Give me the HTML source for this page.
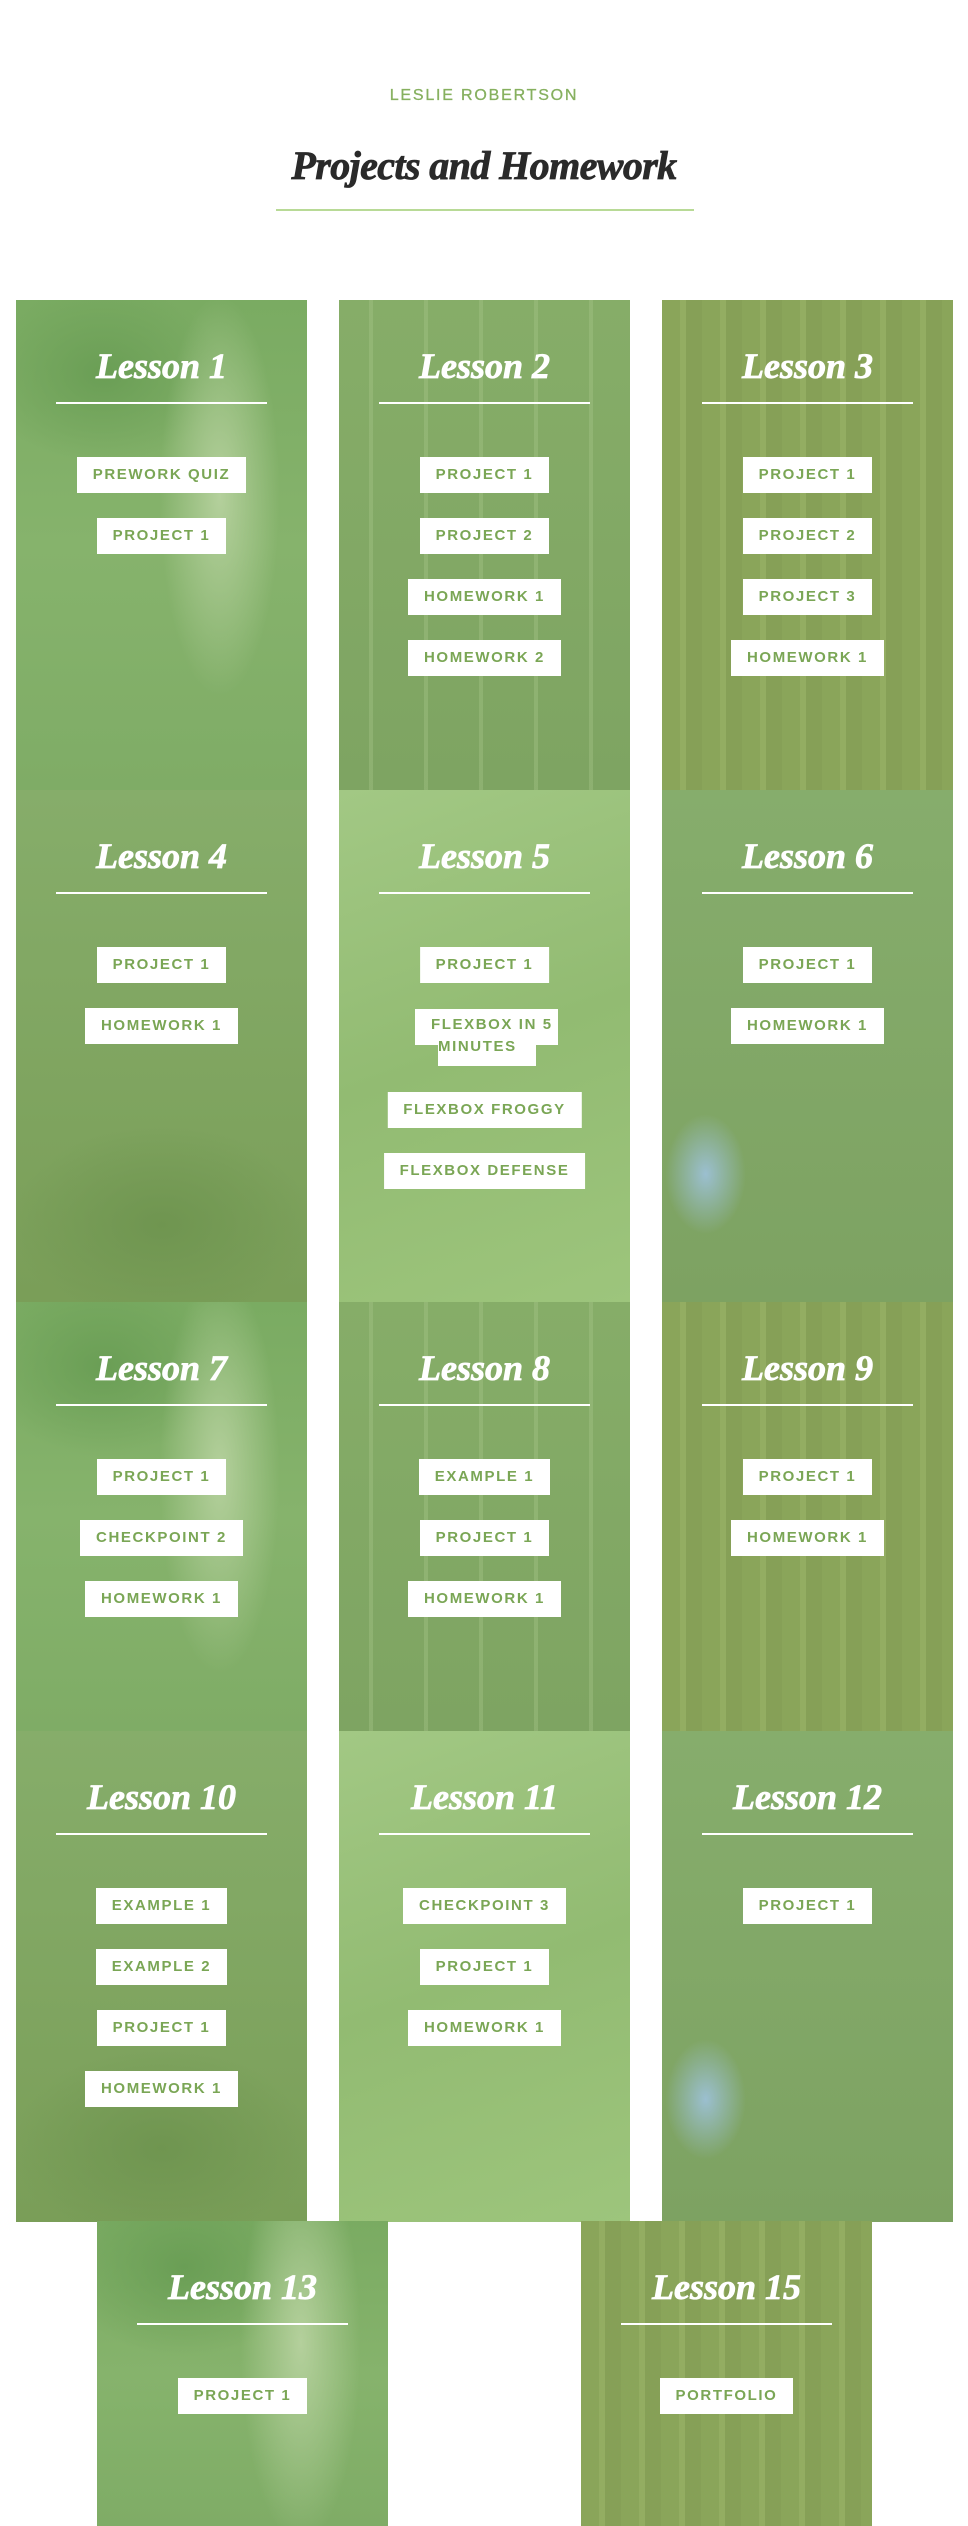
<!DOCTYPE html>
<html><head><meta charset="utf-8"><style>
*{margin:0;padding:0;box-sizing:border-box}
body{width:968px;height:2526px;background:#fff;position:relative;overflow:hidden;font-family:"Liberation Sans",sans-serif}
.sub{position:absolute;top:87px;left:0;width:968px;text-align:center;color:#86b05f;font-size:16px;letter-spacing:1.8px;-webkit-text-stroke:0.3px #86b05f}
h1{position:absolute;top:140px;left:0;width:968px;text-align:center;font-family:"Liberation Serif",serif;font-style:italic;font-weight:bold;font-size:40px;letter-spacing:-0.6px;color:#2a2a2a;line-height:52px;-webkit-text-stroke:0.8px #2a2a2a}
.hr{position:absolute;top:209px;left:276px;width:418px;height:2px;background:#b8da96}
.c{position:absolute;width:291px;overflow:hidden}
.t{position:absolute;top:44px;left:0;width:100%;text-align:center;font-family:"Liberation Serif",serif;font-style:italic;font-weight:bold;font-size:36px;line-height:44px;color:#fff;-webkit-text-stroke:0.8px #fff}
.u{position:absolute;top:102px;left:40px;right:40px;height:2px;background:#fff}
.bs{position:absolute;top:157px;left:0;width:100%;display:flex;flex-direction:column;align-items:center;gap:25px}
.b{height:36px;line-height:36px;padding:0 16px;background:#fff;color:#7aa655;font-size:15px;font-weight:bold;letter-spacing:1.6px;white-space:nowrap}
.A{background:radial-gradient(ellipse 60px 200px at 70% 40%,#b4d09c,transparent),radial-gradient(ellipse 120px 90px at 30% 15%,#6a9e55,transparent),linear-gradient(180deg,#7aab62,#86b36c 50%,#7fac66)}
.B{background:repeating-linear-gradient(90deg,transparent 0 30px,rgba(170,200,140,.35) 30px 34px,transparent 34px 55px),linear-gradient(180deg,#86ad68,#7ea462)}
.C{background:repeating-linear-gradient(90deg,#8aa55a 0 18px,#93ad62 18px 24px,#86a057 24px 40px),#8ba35c}
.D{background:radial-gradient(ellipse 150px 100px at 50% 85%,#6f9550,transparent),linear-gradient(180deg,#86ad6a,#7a9e58)}
.E{background:linear-gradient(160deg,#a2c884,#92bb72 50%,#9dc57c)}
.F{background:radial-gradient(ellipse 40px 60px at 15% 75%,#9bbfd0,transparent),linear-gradient(180deg,#86ad6c,#7da262)}
</style></head><body>
<div class="sub">LESLIE ROBERTSON</div>
<h1>Projects and Homework</h1>
<div class="hr"></div>

<div class="c A" style="left:16px;top:300px;height:490px"><div class="t">Lesson 1</div><div class="u"></div><div class="bs"><div class="b">PREWORK QUIZ</div><div class="b">PROJECT 1</div></div></div>
<div class="c B" style="left:339px;top:300px;height:490px"><div class="t">Lesson 2</div><div class="u"></div><div class="bs"><div class="b">PROJECT 1</div><div class="b">PROJECT 2</div><div class="b">HOMEWORK 1</div><div class="b">HOMEWORK 2</div></div></div>
<div class="c C" style="left:662px;top:300px;height:490px"><div class="t">Lesson 3</div><div class="u"></div><div class="bs"><div class="b">PROJECT 1</div><div class="b">PROJECT 2</div><div class="b">PROJECT 3</div><div class="b">HOMEWORK 1</div></div></div>

<div class="c D" style="left:16px;top:790px;height:512px"><div class="t">Lesson 4</div><div class="u"></div><div class="bs"><div class="b">PROJECT 1</div><div class="b">HOMEWORK 1</div></div></div>
<div class="c E" style="left:339px;top:790px;height:512px"><div class="t">Lesson 5</div><div class="u"></div>
<div class="b" style="position:absolute;top:157px;left:50%;transform:translateX(-50%)">PROJECT 1</div>
<div style="position:absolute;top:219px;left:76px;width:143px;height:36px;background:#fff"></div>
<div style="position:absolute;top:255px;left:99px;width:98px;height:21px;background:#fff"></div>
<div style="position:absolute;top:224px;left:92px;color:#7aa655;font-size:15px;font-weight:bold;letter-spacing:1.6px;line-height:22px;white-space:nowrap">FLEXBOX IN 5<br><span style="margin-left:7px">MINUTES</span></div>
<div class="b" style="position:absolute;top:302px;left:50%;transform:translateX(-50%)">FLEXBOX FROGGY</div>
<div class="b" style="position:absolute;top:363px;left:50%;transform:translateX(-50%)">FLEXBOX DEFENSE</div>
</div>
<div class="c F" style="left:662px;top:790px;height:512px"><div class="t">Lesson 6</div><div class="u"></div><div class="bs"><div class="b">PROJECT 1</div><div class="b">HOMEWORK 1</div></div></div>

<div class="c A" style="left:16px;top:1302px;height:429px"><div class="t">Lesson 7</div><div class="u"></div><div class="bs"><div class="b">PROJECT 1</div><div class="b">CHECKPOINT 2</div><div class="b">HOMEWORK 1</div></div></div>
<div class="c B" style="left:339px;top:1302px;height:429px"><div class="t">Lesson 8</div><div class="u"></div><div class="bs"><div class="b">EXAMPLE 1</div><div class="b">PROJECT 1</div><div class="b">HOMEWORK 1</div></div></div>
<div class="c C" style="left:662px;top:1302px;height:429px"><div class="t">Lesson 9</div><div class="u"></div><div class="bs"><div class="b">PROJECT 1</div><div class="b">HOMEWORK 1</div></div></div>

<div class="c D" style="left:16px;top:1731px;height:491px"><div class="t">Lesson 10</div><div class="u"></div><div class="bs"><div class="b">EXAMPLE 1</div><div class="b">EXAMPLE 2</div><div class="b">PROJECT 1</div><div class="b">HOMEWORK 1</div></div></div>
<div class="c E" style="left:339px;top:1731px;height:491px"><div class="t">Lesson 11</div><div class="u"></div><div class="bs"><div class="b">CHECKPOINT 3</div><div class="b">PROJECT 1</div><div class="b">HOMEWORK 1</div></div></div>
<div class="c F" style="left:662px;top:1731px;height:491px"><div class="t">Lesson 12</div><div class="u"></div><div class="bs"><div class="b">PROJECT 1</div></div></div>

<div class="c A" style="left:97px;top:2221px;height:305px"><div class="t">Lesson 13</div><div class="u"></div><div class="bs"><div class="b">PROJECT 1</div></div></div>
<div class="c C" style="left:581px;top:2221px;height:305px"><div class="t">Lesson 15</div><div class="u"></div><div class="bs"><div class="b">PORTFOLIO</div></div></div>
</body></html>
